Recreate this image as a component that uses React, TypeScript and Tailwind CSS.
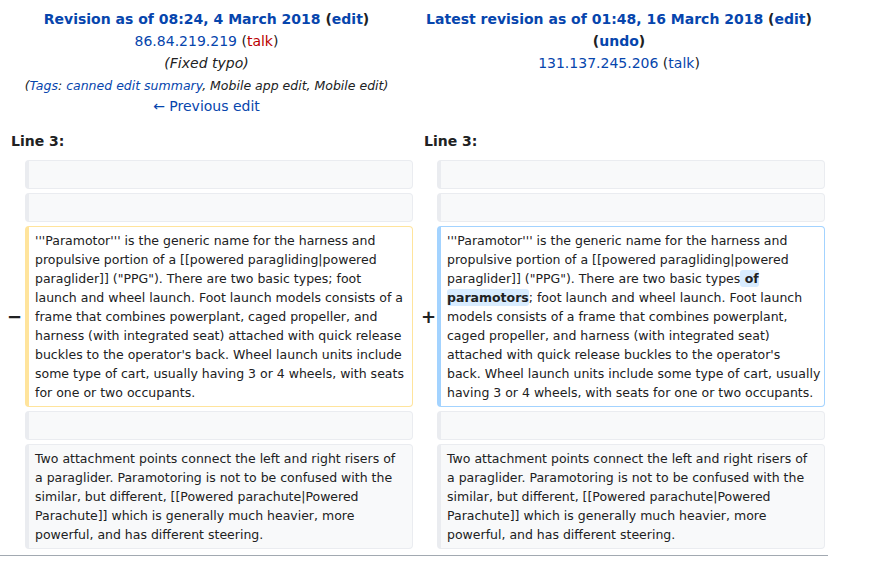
import React from 'react';

type Kind = 'context' | 'deleted' | 'added';

interface Seg {
    text: string;
    hl?: boolean;
}

const blue = 'text-[#0645ad]';

const cellStyles: Record<Kind, string> = {
    context: 'bg-[#f8f9fa] border-[#eaecf0]',
    deleted: 'bg-white border-[#ffe49c]',
    added: 'bg-white border-[#a3d3ff]',
};

const deletedLines: Seg[][] = [
    [{ text: "'''Paramotor''' is the generic name for the harness and" }],
    [{ text: 'propulsive portion of a [[powered paragliding|powered' }],
    [{ text: 'paraglider]] ("PPG"). There are two basic types; foot' }],
    [{ text: 'launch and wheel launch. Foot launch models consists of a' }],
    [{ text: 'frame that combines powerplant, caged propeller, and' }],
    [{ text: 'harness (with integrated seat) attached with quick release' }],
    [{ text: "buckles to the operator's back. Wheel launch units include" }],
    [{ text: 'some type of cart, usually having 3 or 4 wheels, with seats' }],
    [{ text: 'for one or two occupants.' }],
];

const addedLines: Seg[][] = [
    [{ text: "'''Paramotor''' is the generic name for the harness and" }],
    [{ text: 'propulsive portion of a [[powered paragliding|powered' }],
    [{ text: 'paraglider]] ("PPG"). There are two basic types' }, { text: ' of', hl: true }],
    [{ text: 'paramotors', hl: true }, { text: '; foot launch and wheel launch. Foot launch' }],
    [{ text: 'models consists of a frame that combines powerplant,' }],
    [{ text: 'caged propeller, and harness (with integrated seat)' }],
    [{ text: "attached with quick release buckles to the operator's" }],
    [{ text: 'back. Wheel launch units include some type of cart, usually' }],
    [{ text: 'having 3 or 4 wheels, with seats for one or two occupants.' }],
];

const contextLines: Seg[][] = [
    [{ text: 'Two attachment points connect the left and right risers of' }],
    [{ text: 'a paraglider. Paramotoring is not to be confused with the' }],
    [{ text: 'similar, but different, [[Powered parachute|Powered' }],
    [{ text: 'Parachute]] which is generally much heavier, more' }],
    [{ text: 'powerful, and has different steering.' }],
];

function Cell({ kind, lines }: { kind: Kind; lines?: Seg[][] }) {
    return (
        <div className={`rounded-[4px] border border-l-4 px-[6px] py-[4px] text-[12.5px] leading-[19px] text-[#202122] ${cellStyles[kind]}`}>
            {lines ? (
                lines.map((line, i) => (
                    <div key={i} className="whitespace-pre">
                        {line.map((seg, j) =>
                            seg.hl ? (
                                <span key={j} className="bg-[#d8ecff] font-bold rounded-[3px] py-[1px]">{seg.text}</span>
                            ) : (
                                <span key={j}>{seg.text}</span>
                            )
                        )}
                    </div>
                ))
            ) : (
                <div>&nbsp;</div>
            )}
        </div>
    );
}

function Marker({ sign }: { sign?: '−' | '+' }) {
    if (!sign) return <div />;
    return (
        <div className={`flex items-center justify-end font-bold text-[18px] text-[#202122] ${sign === '+' ? 'pr-[1px]' : 'pr-[3px]'}`}>
            {sign}
        </div>
    );
}

export default function App() {
    return (
        <div className="w-[874px] h-[572px] bg-white font-['DejaVu_Sans',sans-serif] text-[#202122]">
            <div className="w-[828px]">
                {/* headers */}
                <div className="flex pt-[8px] text-[14px] leading-[22px]">
                    <div className="w-[413px] text-center">
                        <div className="font-bold">
                            <span className={blue}>Revision as of 08:24, 4 March 2018</span> (<span className={blue}>edit</span>)
                        </div>
                        <div>
                            <span className={blue}>86.84.219.219</span> (<span className="text-[#ba0000]">talk</span>)
                        </div>
                        <div className="italic">(Fixed typo)</div>
                        <div className="italic text-[12.5px] h-[21px] leading-[24px]">
                            (<span className={blue}>Tags</span>: <span className={blue}>canned edit summary</span>, Mobile app edit, Mobile edit)
                        </div>
                        <div className={blue}>← Previous edit</div>
                    </div>
                    <div className="w-[412px] text-center">
                        <div className="font-bold">
                            <span className={blue}>Latest revision as of 01:48, 16 March 2018</span> (<span className={blue}>edit</span>)
                        </div>
                        <div className="font-bold">
                            (<span className={blue}>undo</span>)
                        </div>
                        <div>
                            <span className={blue}>131.137.245.206</span> (<span className={blue}>talk</span>)
                        </div>
                    </div>
                </div>

                {/* line numbers */}
                <div className="flex mt-[12px] h-[22px] leading-[24px] text-[14px] font-bold">
                    <div className="w-[413px] pl-[11px]">Line 3:</div>
                    <div className="w-[412px] pl-[11px]">Line 3:</div>
                </div>

                {/* diff body */}
                <div className="grid grid-cols-[25px_388px_24px_388px] gap-y-[4px] mt-[9px]">
                    <Marker />
                    <Cell kind="context" />
                    <Marker />
                    <Cell kind="context" />

                    <Marker />
                    <Cell kind="context" />
                    <Marker />
                    <Cell kind="context" />

                    <Marker sign="−" />
                    <Cell kind="deleted" lines={deletedLines} />
                    <Marker sign="+" />
                    <Cell kind="added" lines={addedLines} />

                    <Marker />
                    <Cell kind="context" />
                    <Marker />
                    <Cell kind="context" />

                    <Marker />
                    <Cell kind="context" lines={contextLines} />
                    <Marker />
                    <Cell kind="context" lines={contextLines} />
                </div>

                <div className="mt-[6px] border-t border-[#a2a9b1]" />
            </div>
        </div>
    );
}
